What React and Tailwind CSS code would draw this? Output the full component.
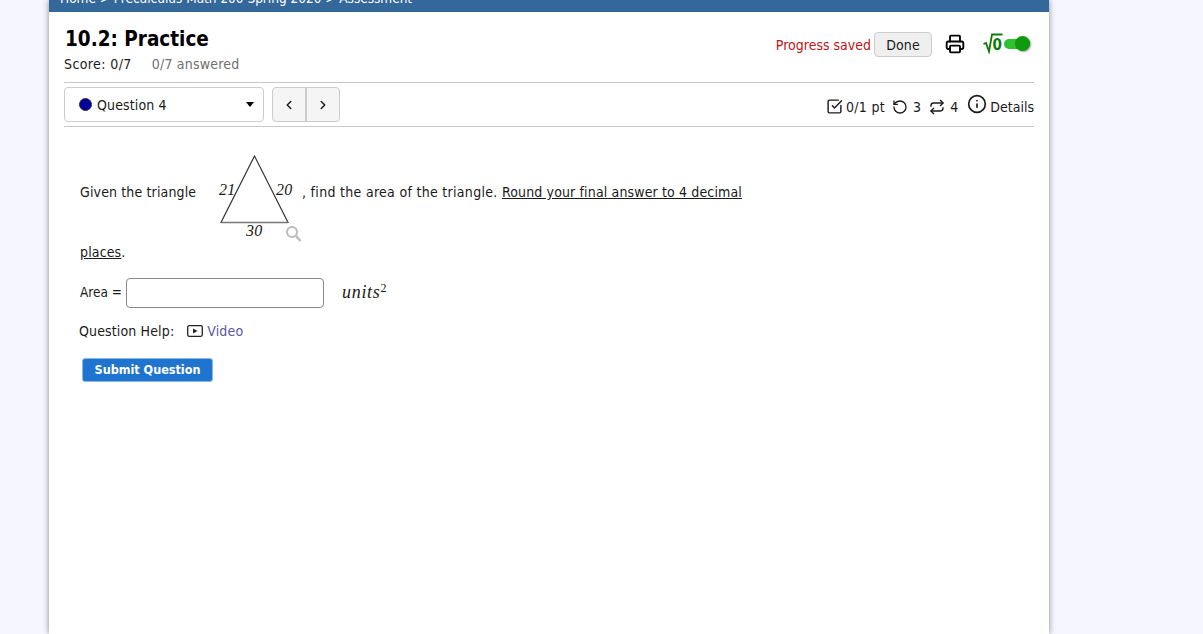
import { Printer, RotateCcw, Repeat, Info, SquareCheckBig, ChevronLeft, ChevronRight } from 'lucide-react';

function Triangle() {
    return (
        <span className="relative block w-[89px] h-[86px] shrink-0">
            <svg className="absolute inset-0" width="89" height="92" viewBox="0 0 89 92">
                <path d="M41.5 2 L8 68.5 L75 68.5 Z" fill="none" stroke="#333" strokeWidth="1.2" />
                <path d="M8 68.5 L75 68.5" stroke="#777" strokeWidth="1.6" />
                <circle cx="79" cy="78" r="5" fill="none" stroke="#bbb" strokeWidth="2" />
                <path d="M83 82 L87.5 87" stroke="#bbb" strokeWidth="2.4" />
            </svg>
            <span className="absolute left-[6px] top-[26px] text-[16px] italic font-['Liberation_Serif']">21</span>
            <span className="absolute left-[63px] top-[26px] text-[16px] italic font-['Liberation_Serif']">20</span>
            <span className="absolute left-[33px] top-[67px] text-[16px] italic font-['Liberation_Serif']">30</span>
        </span>
    );
}

export default function App() {
    return (
        <div className="h-[634px] overflow-hidden bg-[#f6f7fe] text-[14px] leading-[20px] tracking-[0.14px] text-[#1a1a1a] font-['DejaVu_Sans',sans-serif] font-stretch-condensed">
            <div className="ml-[49px] w-[1000px] h-full bg-white shadow-[0_0_6px_rgba(0,0,0,0.45)]">
                {/* nav bar, scrolled mostly out of view */}
                <div className="h-3 bg-[#34679a] overflow-hidden flex items-end pl-[11px]">
                    <span className="text-white text-[13.5px] tracking-normal leading-none mb-[7px] whitespace-nowrap">Home &gt; Precalculus Math 200 Spring 2020 &gt; Assessment</span>
                </div>

                <div className="px-[15px]">
                    <div className="flex justify-between h-[71px] border-b border-[#c8c8c8]">
                        <div>
                            <h1 className="text-[20.5px] leading-[30px] font-bold tracking-normal mt-[12px] ml-px text-black">10.2: Practice</h1>
                            <div className="flex gap-5 tracking-[0.4px]">
                                <span>Score: 0/7</span>
                                <span className="text-[#707070] tracking-[0.2px]">0/7 answered</span>
                            </div>
                        </div>
                        <div className="flex items-start pt-[20px]">
                            <span className="text-[#c01515] tracking-normal leading-[26px] mr-[3px]">Progress saved</span>
                            <button className="h-[25px] w-[58px] rounded-[4px] border border-[#ccc] bg-[#efefef]">Done</button>
                            <Printer className="ml-[13px] mt-[2px] text-black" size={20} strokeWidth={2.2} />
                            <svg className="ml-[18px]" width="20" height="22" viewBox="0 0 20 22">
                                <path d="M0.5 12 L3 11 L6 19.5 L9 2.5 L19.5 2.5" fill="none" stroke="#0a7a0a" strokeWidth="1.8" />
                                <text x="9.5" y="18" fontSize="15" fontWeight="700" fill="#0a7a0a">0</text>
                            </svg>
                            <span className="relative mt-[7px] ml-[1px] w-[26px] h-[10px] rounded-full bg-[#2fc12f]">
                                <span className="absolute right-0 top-[-3px] w-[15px] h-[15px] rounded-full bg-[#0d9a0d] shadow-[1px_1px_2px_rgba(0,0,0,0.4)]" />
                            </span>
                            <span className="w-[4px]" />
                        </div>
                    </div>

                    <div className="flex justify-between items-center h-[44px] border-b border-[#c8c8c8]">
                        <div className="flex items-center gap-2">
                            <div className="flex items-center w-[200px] h-[35px] border border-[#ccc] rounded-[4px] pl-[14px] pr-[9px]">
                                <span className="w-[13px] h-[13px] rounded-full bg-[#00009c] border border-[#333]" />
                                <span className="ml-[5px]">Question 4</span>
                                <span className="ml-auto w-0 h-0 border-x-[4px] border-x-transparent border-t-[5px] border-t-black" />
                            </div>
                            <div className="flex h-[35px] w-[68px] border border-[#ccc] rounded-[4px] bg-[#f5f5f5]">
                                <span className="flex-1 flex items-center justify-center border-r-2 border-[#ccc]"><ChevronLeft size={14} strokeWidth={2.5} /></span>
                                <span className="flex-1 flex items-center justify-center"><ChevronRight size={14} strokeWidth={2.5} /></span>
                            </div>
                        </div>
                        <div className="flex items-center mt-[4px]">
                            <SquareCheckBig size={17} className="mr-[3px]" />
                            <span className="tracking-[0.3px]">0/1 pt</span>
                            <RotateCcw size={16} className="ml-[7px] mr-[5px]" />
                            <span>3</span>
                            <Repeat size={16} className="ml-[8px] mr-[5px]" />
                            <span>4</span>
                            <Info size={20} className="ml-[9px] mr-[3px] -mt-[5px]" />
                            <span className="tracking-normal">Details</span>
                        </div>
                    </div>

                    {/* question body */}
                    <div className="pl-[16px] pt-[27px]">
                        <div className="flex items-start">
                            <span className="w-[133px] pt-[1px] mt-[27px]">Given the triangle</span>
                            <Triangle />
                            <span className="pt-[1px] mt-[27px]"><span className="tracking-[0.3px]">, find the area of the triangle. </span><u>Round your final answer to 4 decimal</u></span>
                        </div>
                        <p className="mt-[2px]"><u>places</u>.</p>
                        <div className="flex items-center mt-[16px]">
                            <span className="w-[46px] text-[13.5px] tracking-normal -mt-[2px]">Area =</span>
                            <input className="w-[198px] h-[30px] border border-[#888] rounded-[4px]" />
                            <span className="ml-[18px] -mt-[3px] text-[18px] tracking-[0.7px] italic font-['Liberation_Serif']">units<sup className="not-italic text-[12px]">2</sup></span>
                        </div>
                        <div className="flex items-center mt-[13px] -ml-px">
                            <span>Question Help:</span>
                            <svg className="ml-[13px]" width="16" height="12" viewBox="0 0 16 12">
                                <rect x="0.7" y="0.7" width="14.6" height="10.6" rx="1.5" fill="none" stroke="#222" strokeWidth="1.3" />
                                <path d="M6 3.5 L10.5 6 L6 8.5 Z" fill="#222" />
                            </svg>
                            <span className="ml-[4px] text-[#5a55a5]">Video</span>
                        </div>
                        <button className="block mt-[17px] ml-[2px] w-[131px] h-[24px] rounded-[3px] bg-[#1f74d0] border border-[#8ab8e8] text-white text-[12.5px] tracking-normal font-bold">Submit Question</button>
                    </div>
                </div>
            </div>
        </div>
    );
}
